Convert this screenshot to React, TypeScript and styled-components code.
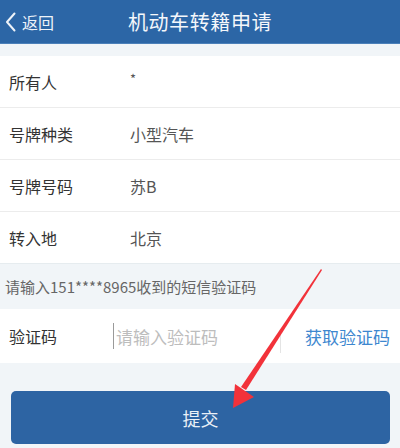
import React from 'react';
import styled, { createGlobalStyle } from 'styled-components';

const GlobalStyle = createGlobalStyle`
  html, body {
    margin: 0;
    padding: 0;
    background: #f1f5f8;
  }
  body {
    font-family: "Noto Sans CJK SC", "Noto Sans", sans-serif;
  }
`

const Page = styled.div`
  position: relative;
  width: 400px;
  height: 448px;
  overflow: hidden;
  background: #f1f5f8;
`
const Header = styled.header`
  height: 44px;
  background: #2c66a6;
  display: grid;
  grid-template-columns: 1fr auto 1fr;
  align-items: center;
  color: #fff;
  border-bottom: 1px solid #4b80b9;
  box-sizing: border-box;
`
const Back = styled.div`
  display: flex;
  align-items: center;
  gap: 6px;
  padding-left: 5px;
  font-size: 16px;
  color: #eef3f9;
`
const Title = styled.div`
  font-size: 20px;
  font-weight: 400;
  letter-spacing: 0.6px;
  color: #f4f7fb;
`
const Strip = styled.div`
  height: 12px;
`
const List = styled.div`
  background: #fff;
`
const Row = styled.div<{ $last?: boolean }>`
  height: 51px;
  display: flex;
  align-items: center;
  padding-left: 9px;
  font-size: 16px;
  border-bottom: ${p => (p.$last ? 'none' : '1px solid #ececec')};
`
const Label = styled.span`
  width: 121px;
  color: #333;
`
const Value = styled.span<{ $small?: boolean }>`
  color: #555;
  font-size: ${p => (p.$small ? '13px' : '16px')};
  margin-top: ${p => (p.$small ? '-6px' : '0')};
`
const Hint = styled.div`
  height: 46px;
  display: flex;
  align-items: center;
  padding-left: 5px;
  font-size: 15px;
  color: #666;
  border-top: 1px solid #e6ecef;
  box-sizing: border-box;
`
const CodeRow = styled.div`
  height: 54px;
  background: #fff;
  display: flex;
  align-items: center;
  padding: 0 10px 0 9px;
  font-size: 16px;
`
const CodeLabel = styled.span`
  width: 104px;
  color: #333;
`
const CodeInput = styled.div`
  flex: 1;
  height: 26px;
  display: flex;
  align-items: center;
  border-left: 1px solid #9a9a9a;
  padding-left: 2px;
  font-size: 17px;
  color: #bdbdbd;
  margin-right: 25px;
  position: relative;
  &::after {
    content: '';
    position: absolute;
    right: -1px;
    top: 12px;
    bottom: -4px;
    width: 1px;
    background: #e4e4e4;
  }
`
const GetCode = styled.span`
  font-size: 17px;
  color: #3d87cf;
`
const ButtonWrap = styled.div`
  padding: 28px 10px 0 11px;
`
const Submit = styled.button`
  width: 100%;
  height: 53px;
  border: none;
  border-radius: 5px;
  background: #2d64a3;
  color: #eaf0f7;
  font-family: inherit;
  font-size: 18px;
`
const Arrow = styled.svg`
  position: absolute;
  left: 0;
  top: 0;
  pointer-events: none;
`

function App() {
  return (
    <Page>
      <GlobalStyle />
      <Header>
        <Back>
          <svg width="11" height="20" viewBox="0 0 11 20">
            <path d="M9.5 1.5 L2 10 L9.5 18.5" fill="none" stroke="#eef3f9" strokeWidth="2" strokeLinecap="round" strokeLinejoin="round" />
          </svg>
          返回
        </Back>
        <Title>机动车转籍申请</Title>
        <div />
      </Header>
      <Strip />
      <List>
        <Row><Label>所有人</Label><Value $small>*</Value></Row>
        <Row><Label>号牌种类</Label><Value>小型汽车</Value></Row>
        <Row><Label>号牌号码</Label><Value>苏B</Value></Row>
        <Row $last><Label>转入地</Label><Value>北京</Value></Row>
      </List>
      <Hint>请输入151****8965收到的短信验证码</Hint>
      <CodeRow>
        <CodeLabel>验证码</CodeLabel>
        <CodeInput>请输入验证码</CodeInput>
        <GetCode>获取验证码</GetCode>
      </CodeRow>
      <ButtonWrap>
        <Submit>提交</Submit>
      </ButtonWrap>
      <Arrow width="400" height="448" viewBox="0 0 400 448">
        <path d="M321 269 L322 270 L246 390 L241 387 Z" fill="#f2323a" />
        <path d="M233 408 L235 384 L254 397 Z" fill="#f2323a" />
      </Arrow>
    </Page>
  )
}

export default App;
